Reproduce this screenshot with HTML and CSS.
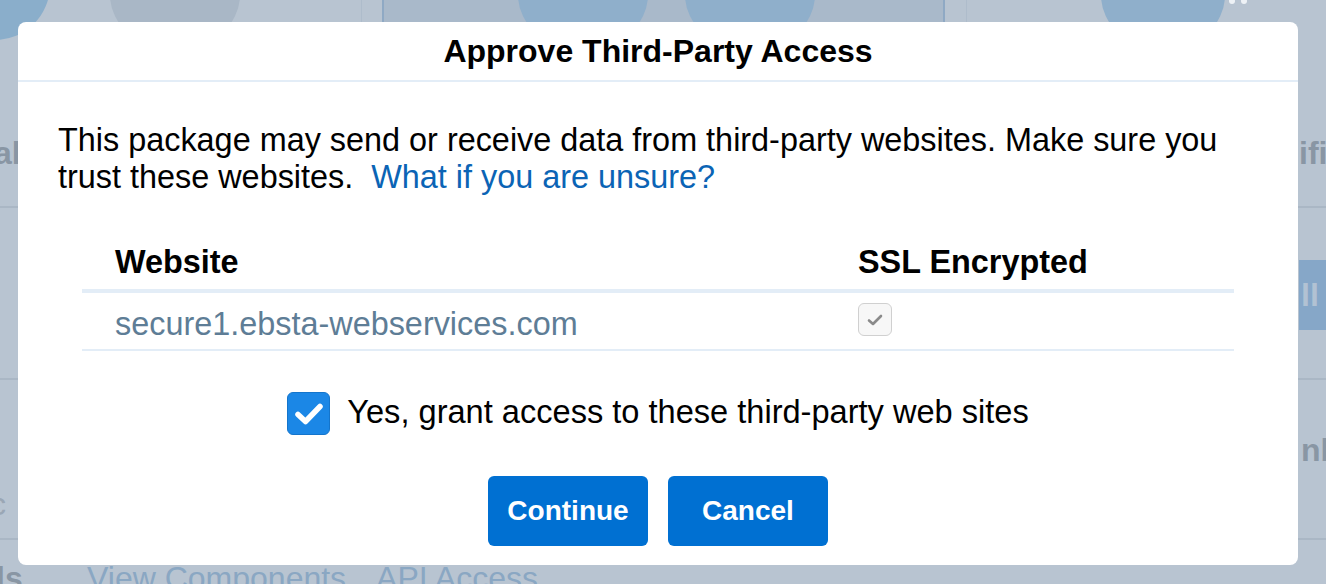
FILE: index.html
```html
<!DOCTYPE html>
<html>
<head>
<meta charset="utf-8">
<link rel="stylesheet" href="styles.css">
</head>
<body>
<div class="backdrop">
  <div class="cards">
    <div class="col col-left">
      <div class="bg-top"><span class="blob blob-a"></span><span class="blob blob-b"></span></div>
      <div class="bg-row bg-title"><span class="ghost-bold left-word">al</span></div>
      <div class="bg-row bg-mid"></div>
      <div class="bg-row bg-low"><span class="ghost left-c">c</span></div>
    </div>
    <div class="col col-mid">
      <div class="bg-top"><span class="blob blob-c"></span><span class="blob blob-d"></span></div>
    </div>
    <div class="col col-right">
      <div class="bg-top"><span class="blob blob-e"></span><span class="dot dot-1"></span><span class="dot dot-2"></span></div>
      <div class="bg-row bg-title right-title"><span class="ghost-bold">ific</span></div>
      <div class="bg-row bg-mid right-mid"><span class="ghost-btn">ll</span></div>
      <div class="bg-row bg-low right-low"><span class="ghost-bold">nbe</span></div>
    </div>
  </div>
  <div class="bg-foot"><span class="ghost-bold foot-ls">ls</span><span class="ghost-link">View Components</span><span class="ghost-link">API Access</span></div>
</div>

<div class="modal">
  <div class="modal-header">
    <h2 class="modal-title">Approve Third-Party Access</h2>
  </div>
  <div class="modal-body">
    <p class="intro">This package may send or receive data from third-party websites. Make sure you trust these websites.&nbsp; <a class="link" href="#">What if you are unsure?</a></p>
    <div class="table">
      <div class="thead">
        <div class="cell c-site">Website</div>
        <div class="cell c-ssl">SSL Encrypted</div>
      </div>
      <div class="trow">
        <div class="cell c-site site-name">secure1.ebsta-webservices.com</div>
        <div class="cell c-ssl ssl-cell">
          <span class="mini-check">
            <svg width="18" height="14" viewBox="0 0 18 14"><path d="M3 7.5 L7 11 L15 3" fill="none" stroke="#8a8a8a" stroke-width="2.6" stroke-linecap="round" stroke-linejoin="round"/></svg>
          </span>
        </div>
      </div>
    </div>
    <label class="grant">
      <span class="big-check">
        <svg width="30" height="24" viewBox="0 0 30 24"><path d="M4 12.5 L11.5 19.5 L26 4.5" fill="none" stroke="#fff" stroke-width="5.5" stroke-linecap="round" stroke-linejoin="round"/></svg>
      </span>
      <span class="grant-text">Yes, grant access to these third-party web sites</span>
    </label>
    <div class="actions">
      <button class="btn">Continue</button>
      <button class="btn">Cancel</button>
    </div>
  </div>
</div>
</body>
</html>
```

FILE: styles.css
```css
* { box-sizing: border-box; }
html, body { margin: 0; padding: 0; }
body {
  width: 1326px;
  height: 584px;
  overflow: hidden;
  background: #b8c4d1;
  font-family: "Liberation Sans", Arial, Helvetica, sans-serif;
  position: relative;
}

/* ---------- backdrop (dimmed page) ---------- */
.backdrop {
  display: flex;
  flex-direction: column;
  height: 584px;
}
.cards {
  display: flex;
  height: 545px;
  flex-shrink: 0;
}
.col { position: relative; overflow: hidden; }
.col-left { width: 362px; border-right: 1px solid #aebccb; }
.col-mid {
  width: 563px;
  margin-left: 20px;
  background: #a9b9ca;
  border-left: 2px solid #8fa9c4;
  border-right: 2px solid #8fa9c4;
}
.col-right { flex: 1; margin-left: 21px; border-left: 1px solid #aebccb; }

.bg-top { height: 100px; position: relative; }
.blob {
  position: absolute;
  border-radius: 50%;
  background: #a9b7c6;
}
.blob-a { width: 110px; height: 110px; left: -60px; top: -70px; background: #8aaecb; }
.blob-b { width: 130px; height: 110px; left: 110px; top: -60px; }
.blob-c { width: 130px; height: 110px; left: 134px; top: -60px; background: #8fafcb; }
.blob-d { width: 130px; height: 110px; left: 301px; top: -60px; background: #8fafcb; }
.blob-e { width: 124px; height: 110px; left: 134px; top: -60px; background: #8fafcb; }
.dot { position: absolute; width: 6px; height: 6px; border-radius: 50%; background: #eef2f6; top: -2px; }
.dot-1 { left: 262px; }
.dot-2 { left: 274px; }

.bg-row { border-bottom: 2px solid #aab7c5; display: flex; align-items: center; }
.bg-title { height: 108px; }
.bg-mid { height: 172px; }
.bg-low { height: 160px; }
.ghost-bold { color: #8996a4; font-weight: bold; font-size: 32px; }
.ghost { color: #9aa7b5; font-size: 32px; }
.left-word { margin-left: -6px; }
.left-c { margin-left: -10px; margin-top: 90px; }
.bg-foot {
  display: flex;
  white-space: nowrap;
  font-size: 32px;
  line-height: 36px;
  margin-top: 15px;
  flex-shrink: 0;
}
.foot-ls { margin-left: -4px; width: 91px; }
.ghost-link { color: #8aa7c3; margin-right: 30px; }
.right-title { padding-left: 332px; }
.right-mid { align-items: flex-start; padding-top: 52px; padding-left: 332px; }
.ghost-btn {
  display: inline-block;
  background: #86a7c8;
  color: #b2c2d3;
  font-weight: bold;
  font-size: 32px;
  height: 70px;
  line-height: 70px;
  padding-left: 2px;
  width: 40px;
}
.right-low { padding-left: 334px; align-items: flex-start; padding-top: 52px; }

/* ---------- modal ---------- */
.modal {
  position: absolute;
  left: 18px;
  top: 22px;
  width: 1280px;
  height: 543px;
  background: #fff;
  border-radius: 8px;
  color: #000;
}
.modal-header {
  height: 60px;
  border-bottom: 2px solid #e3edf7;
  display: flex;
  align-items: center;
  justify-content: center;
}
.modal-title {
  margin: 0;
  font-size: 32px;
  font-weight: bold;
}
.modal-body {
  padding: 40px 40px 0 40px;
}
.intro {
  margin: 0;
  font-size: 32.4px;
  line-height: 37px;
}
.link { color: #0b64b5; text-decoration: none; }

.table {
  margin: 38px 24px 0 24px;
}
.thead {
  display: flex;
  height: 59px;
  align-items: center;
  border-bottom: 4px solid #e3edf7;
  font-weight: bold;
  font-size: 32.4px;
  padding-top: 2px;
}
.trow {
  display: flex;
  height: 58px;
  align-items: flex-start;
  border-bottom: 2px solid #e3edf7;
  font-size: 32.4px;
  line-height: 37px;
}
.cell.c-site { width: 776px; padding-left: 33px; }
.cell.c-ssl { flex: 1; }
.site-name { color: #5e7d96; padding-top: 13px; }
.ssl-cell { display: flex; padding-top: 10px; }
.mini-check {
  display: flex;
  width: 34px;
  height: 33px;
  border: 1.5px solid #d0d0d0;
  border-radius: 6px;
  background: #f7f7f7;
  align-items: center;
  justify-content: center;
}

.grant {
  display: flex;
  align-items: center;
  justify-content: center;
  gap: 17px;
  margin-top: 41px;
  font-size: 32.6px;
}
.big-check {
  display: inline-flex;
  width: 43px;
  height: 43px;
  border-radius: 6px;
  background: #1b87e6;
  border: 1px solid #1475cc;
  align-items: center;
  justify-content: center;
}
.grant-text { padding-bottom: 4px; }

.actions {
  display: flex;
  justify-content: center;
  gap: 20px;
  margin-top: 41px;
}
.btn {
  width: 160px;
  height: 70px;
  border: 0;
  border-radius: 6px;
  background: #0070d2;
  color: #fff;
  font-family: "Liberation Sans", Arial, sans-serif;
  font-weight: bold;
  font-size: 28px;
  padding: 0;
}
```
